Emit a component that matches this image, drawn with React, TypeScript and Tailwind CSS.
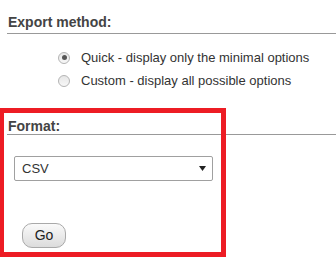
import React from "react";

function Radio({ checked }: { checked?: boolean }) {
  return (
    <span className="w-[12px] h-[12px] rounded-full border border-[#b4b4b4] bg-gradient-to-b from-[#e6e6e6] to-[#f8f8f8] flex items-center justify-center shrink-0">
      {checked ? <span className="w-[5px] h-[5px] rounded-full bg-[#555]" /> : null}
    </span>
  );
}

export default function App() {
  return (
    <div className="w-[336px] h-[259px] bg-white relative overflow-hidden font-['Liberation_Sans',Arial,sans-serif]">
      <div className="pt-[14px] pl-[7px]">
        <div className="text-[14px] font-bold leading-[16px] text-[#444] pl-px pb-[3px] border-b border-[#999]">
          Export method:
        </div>
      </div>
      <div className="mt-[16px] pl-[58px] flex flex-col gap-[8px] text-[13px] leading-[15px] text-[#333]">
        <label className="flex items-center gap-[11px]">
          <Radio checked />
          <span>Quick - display only the minimal options</span>
        </label>
        <label className="flex items-center gap-[11px]">
          <Radio />
          <span>Custom - display all possible options</span>
        </label>
      </div>
      <div className="mt-[30px] pl-[7px]">
        <div className="text-[14px] font-bold leading-[16px] text-[#444] pl-px border-b border-[#999]">
          Format:
        </div>
      </div>
      <div className="mt-[21px] ml-[14px] w-[199px] h-[25px] border border-[#a0a0a0] rounded-[2px] flex items-center justify-between pl-[7px] pr-[6px] text-[13px] text-[#333]">
        <span>CSV</span>
        <svg width="7" height="5" viewBox="0 0 7 5">
          <path d="M0 0 H7 L3.5 5 Z" fill="#222" />
        </svg>
      </div>
      <div className="mt-[42px] ml-[22px]">
        <button className="w-[44px] h-[25px] rounded-[10px] border border-[#a9a9a9] bg-gradient-to-b from-[#fafafa] to-[#dcdcdc] text-[14px] text-[#222] flex items-center justify-center">
          Go
        </button>
      </div>
      <div className="absolute left-0 top-[108px] w-[226px] h-[149px] border-[5px] border-l-4 border-[#ed1c24]" />
    </div>
  );
}
